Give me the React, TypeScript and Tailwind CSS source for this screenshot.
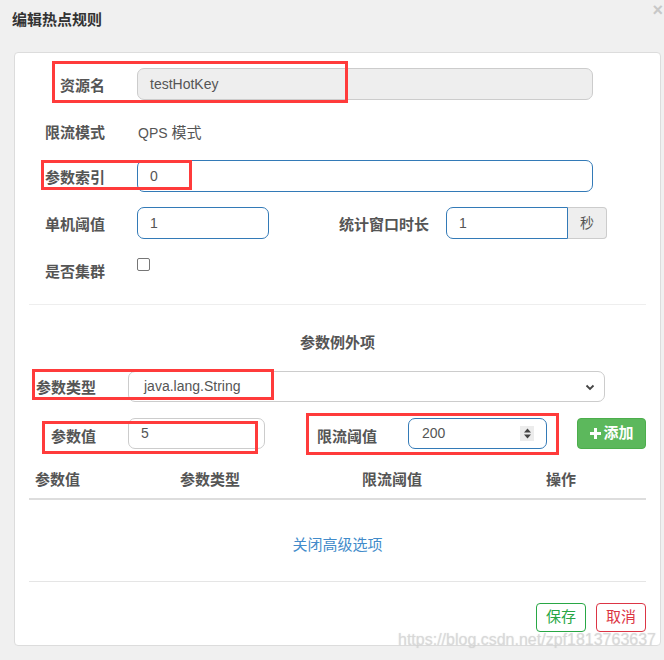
import React from "react";

const font = { fontFamily: '"Liberation Sans", "Noto Sans CJK SC", sans-serif' };

function RedBox({ x, y, w, h }: { x: number; y: number; w: number; h: number }) {
  return (
    <div
      className="absolute border-[3px] border-[#ff3b3b] pointer-events-none"
      style={{ left: x, top: y, width: w, height: h }}
    />
  );
}

export default function App() {
  return (
    <div
      className="relative w-[664px] h-[660px] bg-[#f0f0f0] overflow-hidden text-[#555]"
      style={font}
    >
      {/* header */}
      <div className="h-[52px] flex items-start justify-between">
        <div className="pl-[12px] pt-[10px] text-[15px] leading-[20px] font-bold text-[#333]">
          编辑热点规则
        </div>
        <div className="pr-[1px] pt-[1px] text-[18px] leading-[18px] text-[#c8c8c8] font-bold">×</div>
      </div>

      {/* panel */}
      <div className="ml-[14px] mr-[3px] h-[594px] bg-white border border-[#dcdcdc] rounded-[4px] pt-[15px]">
        {/* row: 资源名 */}
        <div className="flex items-start h-[32px] mb-[15px]">
          <div className="w-[90px] text-right pt-[8px] text-[15px] leading-[20px] font-bold">资源名</div>
          <div className="ml-[32px] w-[456px] h-[32px] rounded-[7px] border border-[#ccc] bg-[#eee] flex items-center pl-[12px] text-[14px] text-[#555]">
            testHotKey
          </div>
        </div>
        {/* row: 限流模式 */}
        <div className="flex items-start h-[32px] mb-[13px]">
          <div className="w-[90px] text-right pt-[8px] text-[15px] leading-[20px] font-bold">限流模式</div>
          <div className="ml-[33px] pt-[8px] text-[14px] leading-[20px] text-[#555]">
            QPS <span className="text-[15px]">模式</span>
          </div>
        </div>
        {/* row: 参数索引 */}
        <div className="flex items-start h-[32px] mb-[15px]">
          <div className="w-[90px] text-right pt-[8px] text-[15px] leading-[20px] font-bold">参数索引</div>
          <div className="ml-[32px] w-[456px] h-[32px] rounded-[7px] border border-[#337ab7] bg-white flex items-center pl-[12px] text-[14px] text-[#555]">
            0
          </div>
        </div>
        {/* row: 单机阈值 / 统计窗口时长 */}
        <div className="flex items-start h-[32px] mb-[15px]">
          <div className="w-[90px] text-right pt-[8px] text-[15px] leading-[20px] font-bold">单机阈值</div>
          <div className="ml-[32px] w-[132px] h-[32px] rounded-[7px] border border-[#337ab7] bg-white flex items-center pl-[12px] text-[14px] text-[#555]">
            1
          </div>
          <div className="ml-[70px] pt-[8px] text-[15px] leading-[20px] font-bold">统计窗口时长</div>
          <div className="ml-[17px] flex">
            <div className="w-[122px] h-[32px] rounded-l-[7px] border border-[#337ab7] bg-white flex items-center pl-[12px] text-[14px] text-[#555]">
              1
            </div>
            <div className="w-[39px] h-[32px] rounded-r-[4px] border border-l-0 border-[#ccc] bg-[#eee] flex items-center justify-center text-[14px] text-[#555]">
              秒
            </div>
          </div>
        </div>
        {/* row: 是否集群 */}
        <div className="flex items-start h-[32px]">
          <div className="w-[90px] text-right pt-[8px] text-[15px] leading-[20px] font-bold">是否集群</div>
          <div className="ml-[32px] mt-[4px] w-[13px] h-[13px] rounded-[2px] border border-[#767676] bg-white" />
        </div>

        <div className="mx-[14px] mt-[18px] border-t border-[#eee]" />

        {/* section 2 */}
        <div className="mt-[28px] text-center text-[15px] leading-[20px] font-bold">参数例外项</div>

        <div className="flex items-start mt-[18px] h-[31px]">
          <div className="w-[81px] text-right pt-[7px] text-[15px] leading-[20px] font-bold">参数类型</div>
          <div className="ml-[32px] w-[477px] h-[31px] rounded-[7px] border border-[#ccc] bg-white flex items-center justify-between pl-[15px] pr-[8px] text-[14px] text-[#555]">
            <span>java.lang.String</span>
            <svg width="12" height="12" viewBox="0 0 12 12">
              <path d="M2.5 4.5 L6 8 L9.5 4.5" fill="none" stroke="#444" strokeWidth="1.8" />
            </svg>
          </div>
        </div>

        <div className="flex items-start mt-[16px] h-[31px]">
          <div className="w-[81px] text-right pt-[9px] text-[15px] leading-[20px] font-bold">参数值</div>
          <div className="ml-[32px] w-[137px] h-[31px] rounded-[7px] border border-[#ccc] bg-white flex items-center pl-[12px] text-[14px] text-[#555]">
            5
          </div>
          <div className="ml-[52px] pt-[9px] text-[15px] leading-[20px] font-bold">限流阈值</div>
          <div className="ml-[31px] w-[139px] h-[31px] rounded-[7px] border border-[#337ab7] bg-white flex items-center justify-between pl-[13px] pr-[12px] text-[14px] text-[#555]">
            <span>200</span>
            <div className="w-[14px] h-[15px] bg-[#ececec] flex items-center justify-center">
              <svg width="9" height="11" viewBox="0 0 9 11">
                <path d="M4.5 0.5 L8 4.5 L1 4.5 Z" fill="#444" />
                <path d="M4.5 10.5 L8 6.5 L1 6.5 Z" fill="#444" />
              </svg>
            </div>
          </div>
          <div className="ml-[30px] w-[69px] h-[31px] rounded-[4px] bg-[#5cb85c] border border-[#4cae4c] flex items-center justify-center gap-[3px] text-white text-[15px] font-bold">
            <svg width="11" height="11" viewBox="0 0 11 11">
              <path d="M4 0 H7 V4 H11 V7 H7 V11 H4 V7 H0 V4 H4 Z" fill="#fff" />
            </svg>
            <span>添加</span>
          </div>
        </div>

        {/* table header */}
        <div className="mx-[14px] mt-[21px] flex h-[30px] border-b-2 border-[#ddd] text-[15px] font-bold leading-[20px]">
          <div className="w-[151px] pl-[6px]">参数值</div>
          <div className="w-[182px]">参数类型</div>
          <div className="w-[184px]">限流阈值</div>
          <div>操作</div>
        </div>

        <div className="mt-[35px] text-center text-[15px] leading-[20px] text-[#428bca]">关闭高级选项</div>

        <div className="mx-[14px] mt-[26px] border-t border-[#e5e5e5]" />

        <div className="flex justify-end gap-[10px] mr-[14px] mt-[21px]">
          <div className="w-[50px] h-[29px] rounded-[4px] border border-[#28a745] text-[#28a745] flex items-center justify-center text-[15px]">
            保存
          </div>
          <div className="w-[50px] h-[29px] rounded-[4px] border border-[#dc3545] text-[#dc3545] flex items-center justify-center text-[15px]">
            取消
          </div>
        </div>
      </div>

      {/* watermark */}
      <div
        className="absolute left-[398px] top-[629px] text-[16px] leading-[22px] text-[rgba(215,215,215,0.75)] pointer-events-none whitespace-nowrap"
        style={{ fontFamily: '"Liberation Sans", sans-serif', textShadow: "0 0 1px rgba(180,180,180,0.5)" }}
      >
        https://blog.csdn.net/zpf1813763637
      </div>

      {/* red annotation boxes */}
      <RedBox x={52} y={61} w={296} h={42} />
      <RedBox x={41} y={160} w={151} h={30} />
      <RedBox x={32} y={369} w={242} h={31} />
      <RedBox x={42} y={421} w={216} h={33} />
      <RedBox x={306} y={413} w={253} h={42} />
    </div>
  );
}
